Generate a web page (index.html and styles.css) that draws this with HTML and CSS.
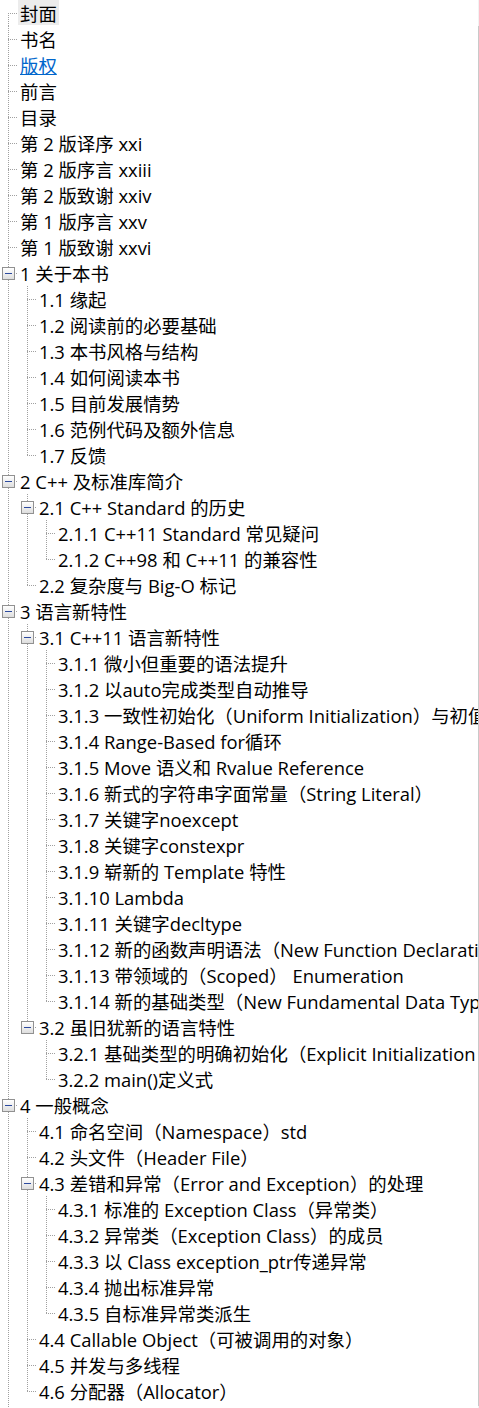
FILE: index.html
```html
<!DOCTYPE html>
<html lang="zh-CN">
<head>
<meta charset="utf-8">
<title>书签</title>
<link rel="stylesheet" href="styles.css">
</head>
<body>
<div class="win">
<div class="tree">
<div class="r"><i class="c f"></i><span class="t sel">封面</span></div>
<div class="r"><i class="c m"></i><span class="t">书名</span></div>
<div class="r"><i class="c m"></i><span class="t hot">版权</span></div>
<div class="r"><i class="c m"></i><span class="t">前言</span></div>
<div class="r"><i class="c m"></i><span class="t">目录</span></div>
<div class="r"><i class="c m"></i><span class="t">第 2 版译序 xxi</span></div>
<div class="r"><i class="c m"></i><span class="t">第 2 版序言 xxiii</span></div>
<div class="r"><i class="c m"></i><span class="t">第 2 版致谢 xxiv</span></div>
<div class="r"><i class="c m"></i><span class="t">第 1 版序言 xxv</span></div>
<div class="r"><i class="c m"></i><span class="t">第 1 版致谢 xxvi</span></div>
<div class="r"><i class="c m"><b class="x"></b></i><span class="t">1 关于本书</span></div>
<div class="r"><i class="g"></i><i class="c m"></i><span class="t">1.1 缘起</span></div>
<div class="r"><i class="g"></i><i class="c m"></i><span class="t">1.2 阅读前的必要基础</span></div>
<div class="r"><i class="g"></i><i class="c m"></i><span class="t">1.3 本书风格与结构</span></div>
<div class="r"><i class="g"></i><i class="c m"></i><span class="t">1.4 如何阅读本书</span></div>
<div class="r"><i class="g"></i><i class="c m"></i><span class="t">1.5 目前发展情势</span></div>
<div class="r"><i class="g"></i><i class="c m"></i><span class="t">1.6 范例代码及额外信息</span></div>
<div class="r"><i class="g"></i><i class="c l"></i><span class="t">1.7 反馈</span></div>
<div class="r"><i class="c m"><b class="x"></b></i><span class="t">2 C++ 及标准库简介</span></div>
<div class="r"><i class="g"></i><i class="c m"><b class="x"></b></i><span class="t">2.1 C++ Standard 的历史</span></div>
<div class="r"><i class="g"></i><i class="g"></i><i class="c m"></i><span class="t">2.1.1 C++11 Standard 常见疑问</span></div>
<div class="r"><i class="g"></i><i class="g"></i><i class="c l"></i><span class="t">2.1.2 C++98 和 C++11 的兼容性</span></div>
<div class="r"><i class="g"></i><i class="c l"></i><span class="t">2.2 复杂度与 Big-O 标记</span></div>
<div class="r"><i class="c m"><b class="x"></b></i><span class="t">3 语言新特性</span></div>
<div class="r"><i class="g"></i><i class="c m"><b class="x"></b></i><span class="t">3.1 C++11 语言新特性</span></div>
<div class="r"><i class="g"></i><i class="g"></i><i class="c m"></i><span class="t">3.1.1 微小但重要的语法提升</span></div>
<div class="r"><i class="g"></i><i class="g"></i><i class="c m"></i><span class="t">3.1.2 以auto完成类型自动推导</span></div>
<div class="r"><i class="g"></i><i class="g"></i><i class="c m"></i><span class="t">3.1.3 一致性初始化（Uniform Initialization）与初值列（Initializer List）</span></div>
<div class="r"><i class="g"></i><i class="g"></i><i class="c m"></i><span class="t">3.1.4 Range-Based for循环</span></div>
<div class="r"><i class="g"></i><i class="g"></i><i class="c m"></i><span class="t">3.1.5 Move 语义和 Rvalue Reference</span></div>
<div class="r"><i class="g"></i><i class="g"></i><i class="c m"></i><span class="t">3.1.6 新式的字符串字面常量（String Literal）</span></div>
<div class="r"><i class="g"></i><i class="g"></i><i class="c m"></i><span class="t">3.1.7 关键字noexcept</span></div>
<div class="r"><i class="g"></i><i class="g"></i><i class="c m"></i><span class="t">3.1.8 关键字constexpr</span></div>
<div class="r"><i class="g"></i><i class="g"></i><i class="c m"></i><span class="t">3.1.9 崭新的 Template 特性</span></div>
<div class="r"><i class="g"></i><i class="g"></i><i class="c m"></i><span class="t">3.1.10 Lambda</span></div>
<div class="r"><i class="g"></i><i class="g"></i><i class="c m"></i><span class="t">3.1.11 关键字decltype</span></div>
<div class="r"><i class="g"></i><i class="g"></i><i class="c m"></i><span class="t">3.1.12 新的函数声明语法（New Function Declaration Syntax）</span></div>
<div class="r"><i class="g"></i><i class="g"></i><i class="c m"></i><span class="t">3.1.13 带领域的（Scoped） Enumeration</span></div>
<div class="r"><i class="g"></i><i class="g"></i><i class="c l"></i><span class="t">3.1.14 新的基础类型（New Fundamental Data Types）</span></div>
<div class="r"><i class="g"></i><i class="c l"><b class="x"></b></i><span class="t">3.2 虽旧犹新的语言特性</span></div>
<div class="r"><i class="g"></i><i class="e"></i><i class="c m"></i><span class="t">3.2.1 基础类型的明确初始化（Explicit Initialization for Fundamental Types）</span></div>
<div class="r"><i class="g"></i><i class="e"></i><i class="c l"></i><span class="t">3.2.2 main()定义式</span></div>
<div class="r"><i class="c m"><b class="x"></b></i><span class="t">4 一般概念</span></div>
<div class="r"><i class="g"></i><i class="c m"></i><span class="t">4.1 命名空间（Namespace）std</span></div>
<div class="r"><i class="g"></i><i class="c m"></i><span class="t">4.2 头文件（Header File）</span></div>
<div class="r"><i class="g"></i><i class="c m"><b class="x"></b></i><span class="t">4.3 差错和异常（Error and Exception）的处理</span></div>
<div class="r"><i class="g"></i><i class="g"></i><i class="c m"></i><span class="t">4.3.1 标准的 Exception Class（异常类）</span></div>
<div class="r"><i class="g"></i><i class="g"></i><i class="c m"></i><span class="t">4.3.2 异常类（Exception Class）的成员</span></div>
<div class="r"><i class="g"></i><i class="g"></i><i class="c m"></i><span class="t">4.3.3 以 Class exception_ptr传递异常</span></div>
<div class="r"><i class="g"></i><i class="g"></i><i class="c m"></i><span class="t">4.3.4 抛出标准异常</span></div>
<div class="r"><i class="g"></i><i class="g"></i><i class="c l"></i><span class="t">4.3.5 自标准异常类派生</span></div>
<div class="r"><i class="g"></i><i class="c m"></i><span class="t">4.4 Callable Object（可被调用的对象）</span></div>
<div class="r"><i class="g"></i><i class="c m"></i><span class="t">4.5 并发与多线程</span></div>
<div class="r"><i class="g"></i><i class="c l"></i><span class="t">4.6 分配器（Allocator）</span></div>
<div class="r tail"><i class="g"></i></div>
</div>
<div class="edge"></div>
</div>
</body>
</html>
```

FILE: styles.css
```css
html, body {
  margin: 0;
  padding: 0;
  background: #ffffff;
}

.win {
  display: flex;
  width: 479px;
  height: 1408px;
  overflow: hidden;
}

.tree {
  width: 478px;
  overflow: hidden;
  font-family: "Open Sans", "Noto Sans CJK SC", sans-serif;
  font-size: 18.4px;
  color: #000000;
}

.edge {
  width: 1px;
  background: linear-gradient(#f2f2f2 0 26px, #c9c9c9 26px 1406px, #f2f2f2 1406px);
}

.r {
  display: flex;
  align-items: stretch;
  height: 26px;
  white-space: nowrap;
}

.r.tail {
  height: 4px;
}

.r i {
  flex: 0 0 19px;
  display: block;
  font-style: normal;
}

.g {
  background-image: repeating-linear-gradient(to bottom, #a0a0a0 0 1px, transparent 1px 2px);
  background-size: 1px 100%;
  background-position: 8px 0;
  background-repeat: no-repeat;
}

.c {
  position: relative;
  flex-basis: 18px !important;
  margin-right: 1px;
  background-image:
    repeating-linear-gradient(to bottom, #a0a0a0 0 1px, transparent 1px 2px),
    repeating-linear-gradient(to right, #a0a0a0 0 1px, transparent 1px 2px);
  background-repeat: no-repeat;
  background-size: 1px 26px, 10px 1px;
  background-position: 8px 0, 8px 13px;
}

.c.f {
  background-size: 1px 13px, 10px 1px;
  background-position: 8px 13px, 8px 13px;
}

.c.l {
  background-size: 1px 14px, 10px 1px;
  background-position: 8px 0, 8px 13px;
}

.x {
  position: absolute;
  left: 2px;
  top: 7px;
  width: 11px;
  height: 11px;
  border: 1px solid #919191;
  background: linear-gradient(#ffffff, #dedede);
}

.x::after {
  content: "";
  position: absolute;
  left: 2px;
  top: 5px;
  width: 7px;
  height: 1px;
  background: #2c4a9e;
}

.t {
  display: block;
  margin-left: -1px;
  padding: 1px 2px 0;
  height: 24px;
  line-height: 25px;
}

.t.sel {
  background: #ececec;
}

.t.hot {
  color: #0066cc;
  text-decoration: underline;
}
```
